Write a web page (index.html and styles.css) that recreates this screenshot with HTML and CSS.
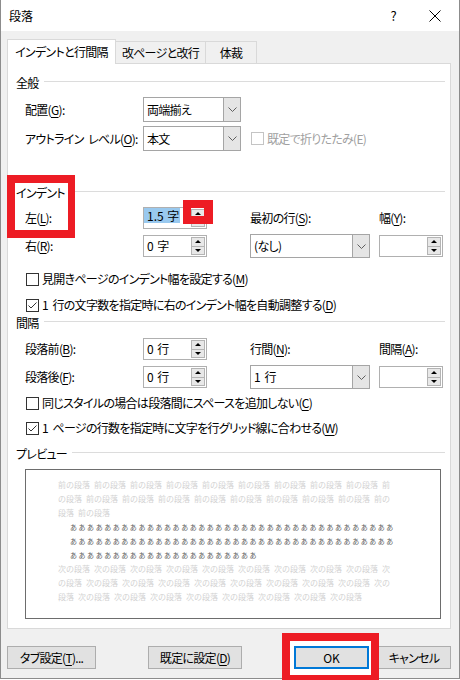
FILE: index.html
```html
<!DOCTYPE html>
<html lang="ja">
<head>
<meta charset="utf-8">
<title>段落</title>
<link rel="stylesheet" href="styles.css">
</head>
<body>
<div class="window">
  <div class="titlebar">
    <span class="title">段落</span>
    <span class="help">?</span>
    <span class="close"><svg width="12" height="12" viewBox="0 0 12 12"><path d="M0.5 0.5 L11.5 11.5 M11.5 0.5 L0.5 11.5" stroke="#000" stroke-width="1" fill="none"/></svg></span>
  </div>
  <div class="client">
    <div class="tabs">
      <div class="tab tab-active">インデントと行間隔</div>
      <div class="tab tab-2">改ページと改行</div>
      <div class="tab tab-3">体裁</div>
    </div>
    <div class="pane">
      <div class="ghead g-general"><span>全般</span><i class="ghead-line"></i></div>

      <div class="frow r-align">
        <span class="lbl">配置(<u>G</u>):</span>
        <div class="combo combo-sm"><span class="combo-val">両端揃え</span><span class="combo-btn"><svg width="9" height="5" viewBox="0 0 9 5"><path d="M0.5 0.5 L4.5 4.5 L8.5 0.5" stroke="#5f5f5f" fill="none"/></svg></span></div>
      </div>
      <div class="frow r-outline">
        <span class="lbl">アウトライン レベル(<u>O</u>):</span>
        <div class="combo combo-sm"><span class="combo-val">本文</span><span class="combo-btn"><svg width="9" height="5" viewBox="0 0 9 5"><path d="M0.5 0.5 L4.5 4.5 L8.5 0.5" stroke="#5f5f5f" fill="none"/></svg></span></div>
        <div class="cbrow-inline disabled"><span class="cb cb-dis"></span><span>既定で折りたたみ(E)</span></div>
      </div>

      <div class="ghead g-indent"><span>インデント</span><i class="ghead-line"></i></div>

      <div class="frow r-left">
        <span class="lbl">左(<u>L</u>):</span>
        <div class="spin">
          <span class="spin-val spin-val-sel"><span class="sel">1.5 字</span></span>
          <span class="spin-btns"><span class="sb sb-up"></span><span class="sb sb-down"></span></span>
          <span class="mark-spin"></span>
        </div>
        <span class="lbl">最初の行(<u>S</u>):</span>
        <span class="lbl">幅(<u>Y</u>):</span>
      </div>
      <div class="frow r-right">
        <span class="lbl">右(<u>R</u>):</span>
        <div class="spin">
          <span class="spin-val">0 字</span>
          <span class="spin-btns"><span class="sb sb-up"></span><span class="sb sb-down"></span></span>
        </div>
        <div class="combo combo-wide"><span class="combo-val">(なし)</span><span class="combo-btn"><svg width="9" height="5" viewBox="0 0 9 5"><path d="M0.5 0.5 L4.5 4.5 L8.5 0.5" stroke="#5f5f5f" fill="none"/></svg></span></div>
        <div class="spin">
          <span class="spin-val"></span>
          <span class="spin-btns"><span class="sb sb-up"></span><span class="sb sb-down"></span></span>
        </div>
      </div>

      <div class="cbrow cb-mirror"><span class="cb"></span><span>見開きページのインデント幅を設定する(<u>M</u>)</span></div>
      <div class="cbrow cb-auto"><span class="cb"><svg width="11" height="11" viewBox="0 0 11 11"><path d="M1.5 5.5 L4 8 L9.5 2.5" stroke="#333" fill="none"/></svg></span><span>1 行の文字数を指定時に右のインデント幅を自動調整する(<u>D</u>)</span></div>

      <div class="ghead g-space"><span>間隔</span><i class="ghead-line"></i></div>

      <div class="frow r-before">
        <span class="lbl">段落前(<u>B</u>):</span>
        <div class="spin">
          <span class="spin-val">0 行</span>
          <span class="spin-btns"><span class="sb sb-up"></span><span class="sb sb-down"></span></span>
        </div>
        <span class="lbl">行間(<u>N</u>):</span>
        <span class="lbl">間隔(<u>A</u>):</span>
      </div>
      <div class="frow r-after">
        <span class="lbl">段落後(<u>F</u>):</span>
        <div class="spin">
          <span class="spin-val">0 行</span>
          <span class="spin-btns"><span class="sb sb-up"></span><span class="sb sb-down"></span></span>
        </div>
        <div class="combo combo-wide"><span class="combo-val">1 行</span><span class="combo-btn"><svg width="9" height="5" viewBox="0 0 9 5"><path d="M0.5 0.5 L4.5 4.5 L8.5 0.5" stroke="#5f5f5f" fill="none"/></svg></span></div>
        <div class="spin">
          <span class="spin-val"></span>
          <span class="spin-btns"><span class="sb sb-up"></span><span class="sb sb-down"></span></span>
        </div>
      </div>

      <div class="cbrow cb-same"><span class="cb"></span><span>同じスタイルの場合は段落間にスペースを追加しない(<u>C</u>)</span></div>
      <div class="cbrow cb-grid"><span class="cb"><svg width="11" height="11" viewBox="0 0 11 11"><path d="M1.5 5.5 L4 8 L9.5 2.5" stroke="#333" fill="none"/></svg></span><span>1 ページの行数を指定時に文字を行グリッド線に合わせる(<u>W</u>)</span></div>

      <div class="ghead g-preview"><span>プレビュー</span><i class="ghead-line"></i></div>

      <div class="preview">
        <p class="pv">前の段落 前の段落 前の段落 前の段落 前の段落 前の段落 前の段落 前の段落 前の段落 前</p>
        <p class="pv">の段落 前の段落 前の段落 前の段落 前の段落 前の段落 前の段落 前の段落 前の段落 前の</p>
        <p class="pv">段落 前の段落</p>
        <p class="pv pv-cur">ああああああああああああああああああああああああああああああああああああああ</p>
        <p class="pv pv-cur">ああああああああああああああああああああああああああああああああああああああ</p>
        <p class="pv pv-cur">ああああああああああああああああああああああ</p>
        <p class="pv">次の段落 次の段落 次の段落 次の段落 次の段落 次の段落 次の段落 次の段落 次の段落 次</p>
        <p class="pv">の段落 次の段落 次の段落 次の段落 次の段落 次の段落 次の段落 次の段落 次の段落 次の</p>
        <p class="pv">段落 次の段落 次の段落 次の段落 次の段落 次の段落 次の段落 次の段落 次の段落</p>
      </div>

      <span class="mark-indent"></span>
    </div>

    <div class="btnbar">
      <div class="btn btn-tab">タブ設定(<u>T</u>)...</div>
      <div class="btn btn-default">既定に設定(<u>D</u>)</div>
      <div class="okwrap">
        <span class="mark-ok"></span>
        <div class="btn btn-ok">OK</div>
      </div>
      <div class="btn btn-cancel">キャンセル</div>
    </div>
  </div>
</div>
</body>
</html>
```

FILE: styles.css
```css
* { box-sizing: border-box; }
html, body { margin: 0; padding: 0; }
body {
  width: 460px;
  height: 680px;
  overflow: hidden;
  background: #fff;
  font-family: "Noto Sans CJK JP", "Noto Sans", sans-serif;
  font-size: 12px;
  line-height: 16px;
  color: #000;
  font-feature-settings: "palt" 1;
  letter-spacing: -0.7px;
  word-spacing: 2.5px;
}
u { text-decoration: underline; text-underline-offset: 2px; }
p { margin: 0; }

.window {
  width: 460px;
  height: 679px;
  border: 1px solid #8c8c8c;
  border-top: none;
  background: #f0f0f0;
  display: flex;
  flex-direction: column;
}

.titlebar {
  flex: none;
  height: 31px;
  background: #fff;
  display: flex;
  align-items: center;
}
.title { margin-left: 8px; font-size: 12px; letter-spacing: 0; }
.help { margin-left: auto; margin-right: 33px; font-size: 13px; font-feature-settings: normal; }
.close { display: flex; margin-right: 18px; }

.client { flex: 1; padding: 8px 0 0 6px; }

.tabs { display: flex; align-items: flex-end; height: 24px; }
.tab {
  height: 22px;
  border-top: 1px solid #d9d9d9;
  border-right: 1px solid #d9d9d9;
  display: flex;
  align-items: center;
  justify-content: center;
  white-space: nowrap;
}
.tab-active {
  width: 109px;
  height: 25px;
  margin-bottom: -1px;
  background: #fff;
  border-left: 1px solid #d9d9d9;
  position: relative;
  z-index: 1;
  padding-bottom: 1px;
}
.tab-2 { width: 90px; }
.tab-3 { width: 51px; }

.pane {
  width: 444px;
  height: 566px;
  background: #fff;
  border: 1px solid #d9d9d9;
  padding-right: 5px;
  position: relative;
}

.ghead { display: flex; height: 14px; line-height: 14px; margin-left: 8px; }
.ghead-line { flex: 1; height: 1px; background: #dcdcdc; margin: 5px 0 0 5px; }
.g-general { margin-top: 12px; }
.g-indent { margin-top: 35px; }
.g-space { margin-top: 3px; }
.g-preview { margin-top: 11px; }

.frow {
  display: grid;
  grid-template-columns: 118px 107px 129px 64px;
  align-items: center;
  margin-left: 17px;
}
.lbl { white-space: nowrap; }
.r-align { margin-top: 7px; height: 25px; }
.r-outline { margin-top: 4px; height: 25px; }
.r-left { margin-top: 7px; height: 22px; }
.r-right { margin-top: 5px; height: 24px; }
.r-before { margin-top: 8px; height: 22px; }
.r-after { margin-top: 5px; height: 24px; }

.combo {
  display: flex;
  background: #fff;
  border: 1px solid #a5a5a5;
}
.combo-sm { width: 98px; height: 25px; }
.combo-wide { width: 120px; height: 24px; }
.combo-val { flex: 1; display: flex; align-items: center; padding-left: 3px; white-space: nowrap; }
.combo-btn {
  width: 17px;
  background: #e5e5e5;
  border-left: 1px solid #a5a5a5;
  display: flex;
  align-items: center;
  justify-content: center;
}

.spin {
  width: 64px;
  height: 22px;
  background: #fff;
  border: 1px solid #b0b0b0;
  display: flex;
  position: relative;
}
.spin-val { flex: 1; display: flex; align-items: center; padding-left: 3px; white-space: nowrap; letter-spacing: 0; word-spacing: 1px; }
.spin-val-sel { align-items: flex-start; padding-left: 0; }
.sel { background: #99c9ef; height: 15px; line-height: 15px; padding: 0 1px 0 3px; }
.spin-btns { width: 15px; display: flex; flex-direction: column; padding: 1px 1px 1px 0; }
.sb {
  flex: 1;
  background: #e8e8e8;
  border: 1px solid #b4b4b4;
  display: flex;
  align-items: center;
  justify-content: center;
}
.sb-down { border-top: none; }
.sb-up::after {
  content: "";
  border-left: 3px solid transparent;
  border-right: 3px solid transparent;
  border-bottom: 3px solid #000;
}
.sb-down::after {
  content: "";
  border-left: 3px solid transparent;
  border-right: 3px solid transparent;
  border-top: 3px solid #000;
}

.cb {
  flex: none;
  width: 13px;
  height: 13px;
  border: 1px solid #333;
  background: #fff;
  display: flex;
  align-items: center;
  justify-content: center;
}
.cb-dis { border-color: #c4c4c4; }
.cbrow { display: flex; align-items: center; gap: 3px; height: 16px; margin-left: 18px; white-space: nowrap; }
.cbrow-inline { display: flex; align-items: center; gap: 3px; margin-left: 1px; white-space: nowrap; }
.disabled { color: #a0a0a0; }
.cb-mirror { margin-top: 13px; }
.cb-auto { margin-top: 10px; }
.cb-same { margin-top: 6px; }
.cb-grid { margin-top: 9px; }

.preview {
  margin: 8px 4px 0 17px;
  height: 150px;
  border: 1px solid #6d6d6d;
  padding-top: 8px;
}
.pv {
  height: 14px;
  line-height: 14px;
  font-size: 8px;
  white-space: nowrap;
  padding-left: 32px;
  color: #d2d2d2;
  letter-spacing: 0;
  word-spacing: 2.2px;
  font-feature-settings: normal;
}
.pv-cur {
  padding-left: 44px;
  color: #5a5a5a;
  font-size: 7px;
  letter-spacing: 1.55px;
}

.btnbar { display: flex; margin-top: 17px; height: 23px; }
.btn {
  height: 23px;
  border: 1px solid #adadad;
  background: #e1e1e1;
  display: flex;
  align-items: center;
  justify-content: center;
  white-space: nowrap;
}
.btn-tab { width: 89px; }
.btn-default { width: 94px; margin-left: 52px; }
.okwrap { position: relative; margin-left: 52px; }
.btn-ok { width: 75px; border: 2px solid #0078d7; position: relative; z-index: 3; font-feature-settings: normal; letter-spacing: 0; }
.btn-cancel { width: 74px; margin-left: 8px; }

.mark-ok {
  position: absolute;
  left: -12px;
  top: -13px;
  width: 97px;
  height: 50px;
  border: 8px solid #ed1c24;
  background: #fff;
  z-index: 2;
}
.mark-spin {
  position: absolute;
  left: 39px;
  top: -8px;
  width: 30px;
  height: 24px;
  border-style: solid;
  border-color: #ed1c24;
  border-width: 8px 9px 8px 8px;
  z-index: 2;
}
.mark-indent {
  position: absolute;
  left: -1px;
  top: 111px;
  width: 68px;
  height: 63px;
  border-style: solid;
  border-color: #ed1c24;
  border-width: 8px 7px 8px 8px;
  z-index: 2;
}
```
